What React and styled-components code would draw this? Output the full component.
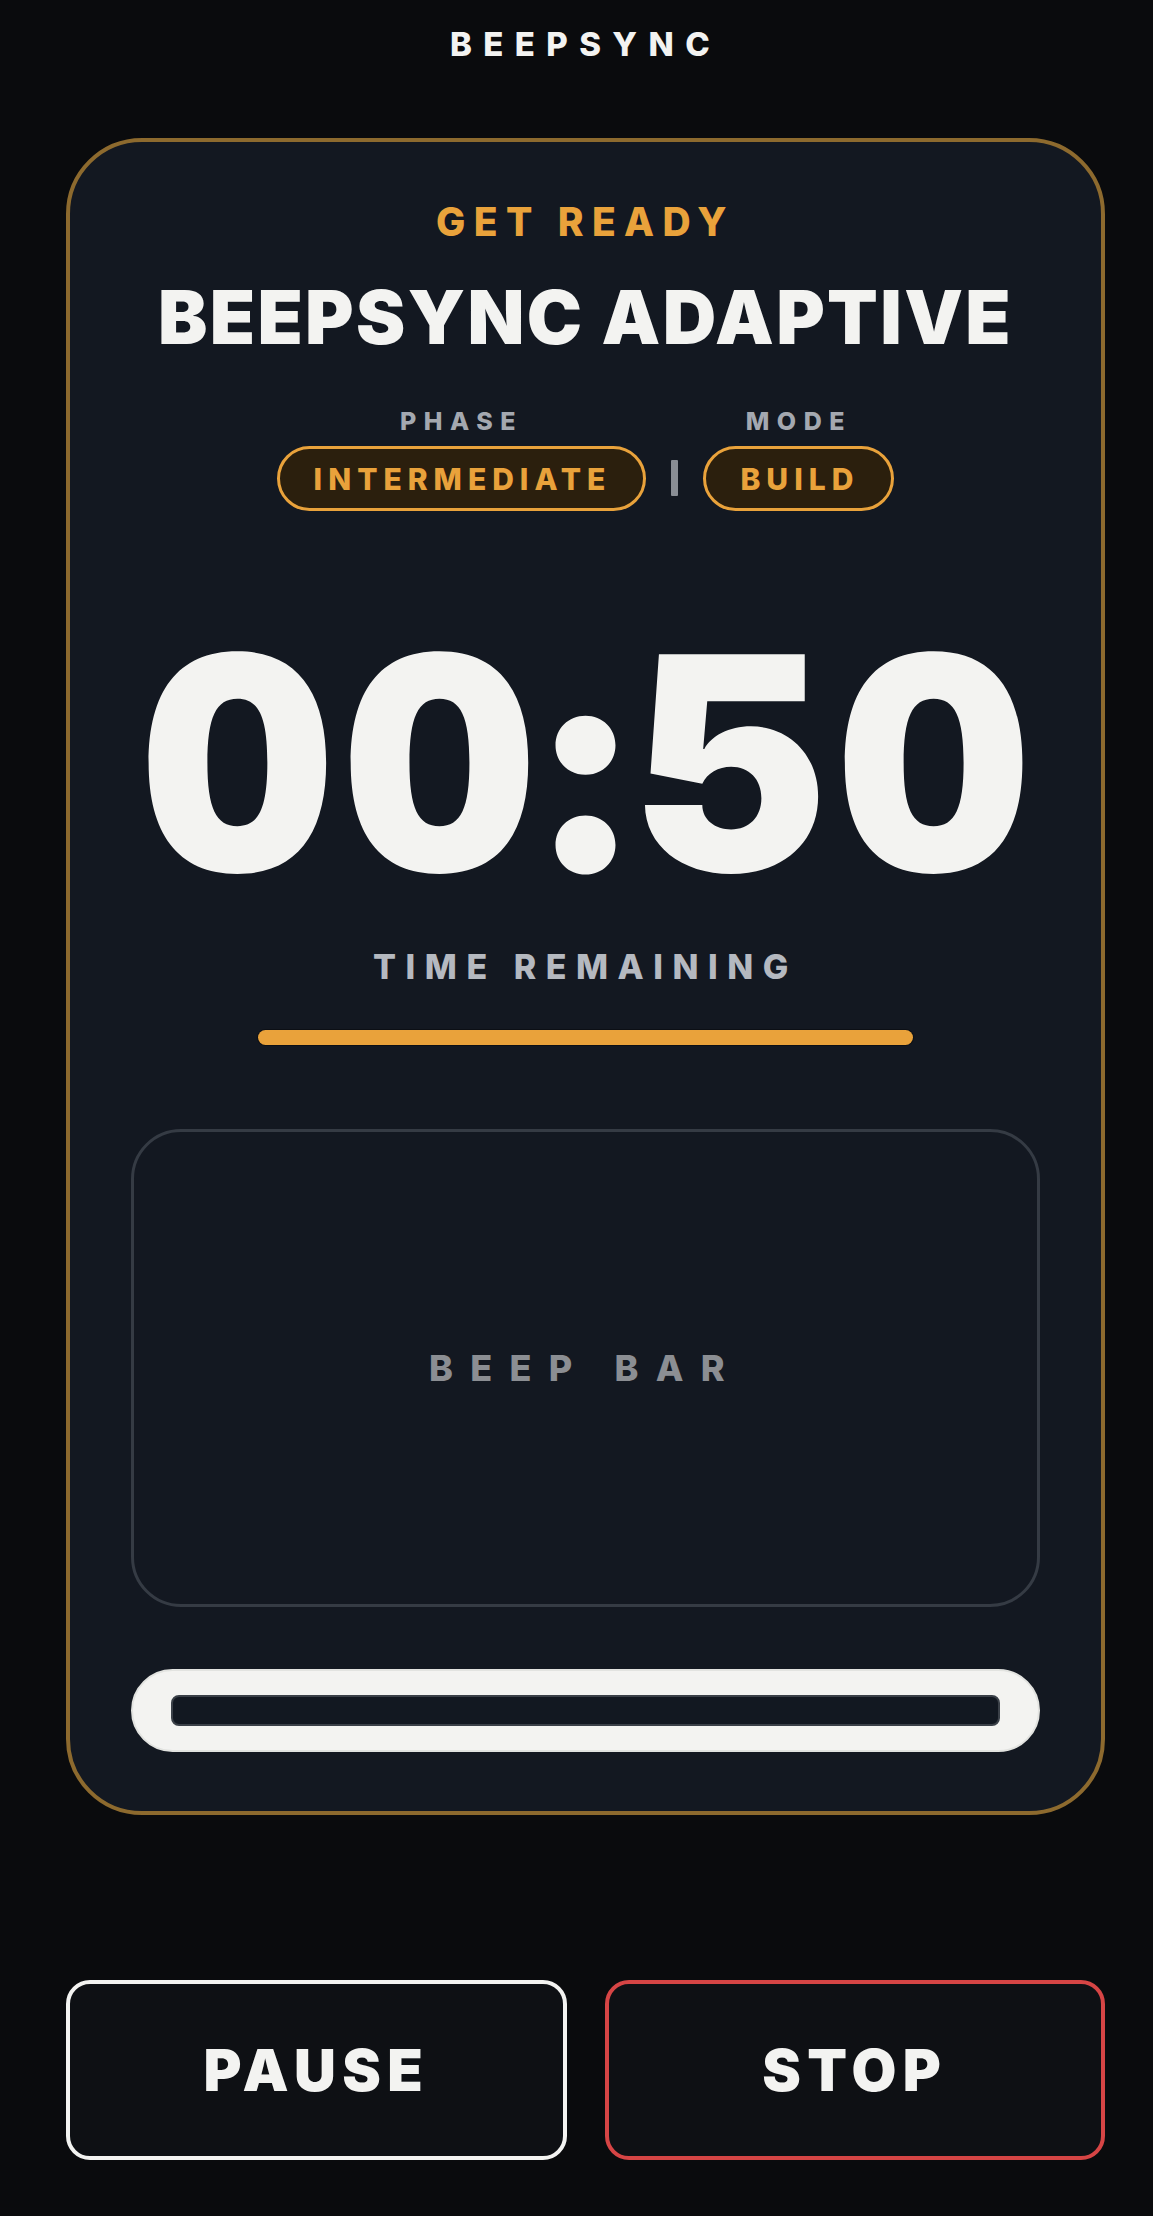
import React from "react";
import styled, { createGlobalStyle } from "styled-components";

const Global = createGlobalStyle`
  html, body { margin: 0; padding: 0; background: #0a0b0d; }
  body { font-family: Inter, "Noto Sans", "Liberation Sans", sans-serif; color: #f3f3f1; }
  * { box-sizing: border-box; }
`;

const Page = styled.div`
  min-height: 2216px;
  padding: 28px 48px 0 66px;
  display: flex;
  flex-direction: column;
  align-items: stretch;
`;

const Brand = styled.h1`
  margin: 0;
  text-align: center;
  font-size: 33px;
  line-height: 1;
  font-weight: 800;
  letter-spacing: 0.345em;
  color: #f3f3f1;
`;

const Card = styled.section`
  margin-top: 77px;
  width: 1039px;
  border: 4px solid #8d6a2e;
  border-radius: 76px;
  background: #131821;
  padding: 60px 61px 59px 61px;
  display: flex;
  flex-direction: column;
  align-items: center;
`;

const Status = styled.div`
  font-size: 39px;
  line-height: 1;
  font-weight: 800;
  letter-spacing: 0.215em;
  color: #e9a23b;
`;

const Title = styled.h2`
  margin: 39px 0 0;
  font-size: 74px;
  line-height: 1;
  font-weight: 900;
  letter-spacing: 0.032em;
  color: #f3f3f1;
`;

const MetaRow = styled.div`
  margin-top: 55px;
  display: flex;
  align-items: flex-end;
  gap: 25px;
`;

const MetaCol = styled.div`
  display: flex;
  flex-direction: column;
  align-items: center;
  gap: 12px;
`;

const MetaLabel = styled.div`
  font-size: 25px;
  line-height: 1;
  font-weight: 800;
  letter-spacing: 0.3em;
  color: #a4a8b0;
`;

const Pill = styled.div`
  height: 65px;
  padding: 0 32px 0 34px;
  border: 3px solid #e9a23b;
  border-radius: 40px;
  background: #2b1f0d;
  color: #e9a23b;
  font-size: 30px;
  font-weight: 800;
  letter-spacing: 0.2em;
  display: flex;
  align-items: center;
  justify-content: center;
`;

const Divider = styled.span`
  width: 7px;
  height: 36px;
  margin-bottom: 15px;
  background: #8a8e95;
  border-radius: 1px;
`;

const Timer = styled.div`
  margin-top: 103px;
  font-size: 298px;
  line-height: 1;
  font-weight: 900;
  letter-spacing: 10px;
  padding-left: 10px;
  color: #f3f3f1;
  font-variant-numeric: tabular-nums;
`;

const TimerLabel = styled.div`
  margin-top: 38px;
  font-size: 34px;
  line-height: 1;
  font-weight: 800;
  letter-spacing: 0.28em;
  color: #b5b9c0;
`;

const Progress = styled.div`
  margin-top: 46px;
  width: 655px;
  height: 15px;
  border-radius: 8px;
  background: #e9a23b;
  box-shadow: 0 0 0 1px rgba(0, 0, 0, 0.35);
`;

const BeepBox = styled.div`
  margin-top: 84px;
  width: 100%;
  height: 478px;
  border: 3px solid #353b44;
  border-radius: 50px;
  display: flex;
  align-items: center;
  justify-content: center;
`;

const BeepText = styled.div`
  font-size: 36px;
  line-height: 1;
  font-weight: 800;
  letter-spacing: 0.48em;
  color: #8b8e93;
`;

const Track = styled.div`
  margin-top: 62px;
  width: 100%;
  height: 83px;
  border-radius: 42px;
  background: #f3f3f1;
  border: 2px solid #e2e3e0;
  padding: 24px 38px;
  display: flex;
`;

const TrackInner = styled.div`
  flex: 1;
  border: 2px solid #3a4048;
  border-radius: 8px;
  background: #121821;
`;

const Controls = styled.div`
  margin-top: 165px;
  width: 1039px;
  display: grid;
  grid-template-columns: 1fr 1fr;
  gap: 38px;
`;

const ControlButton = styled.button`
  height: 180px;
  border: 4px solid ${(p) => (p.$danger ? "#d64545" : "#f3f3f1")};
  border-radius: 24px;
  background: #0e1014;
  color: #f3f3f1;
  font-family: inherit;
  font-size: 58px;
  font-weight: 900;
  letter-spacing: 0.11em;
  padding: 0;
  cursor: pointer;
`;

export default function App() {
  return (
    <>
      <Global />
      <Page>
        <Brand>BEEPSYNC</Brand>
        <Card>
          <Status>GET READY</Status>
          <Title>BEEPSYNC ADAPTIVE</Title>
          <MetaRow>
            <MetaCol>
              <MetaLabel>PHASE</MetaLabel>
              <Pill>INTERMEDIATE</Pill>
            </MetaCol>
            <Divider />
            <MetaCol>
              <MetaLabel>MODE</MetaLabel>
              <Pill>BUILD</Pill>
            </MetaCol>
          </MetaRow>
          <Timer>00:50</Timer>
          <TimerLabel>TIME REMAINING</TimerLabel>
          <Progress />
          <BeepBox>
            <BeepText>BEEP BAR</BeepText>
          </BeepBox>
          <Track>
            <TrackInner />
          </Track>
        </Card>
        <Controls>
          <ControlButton>PAUSE</ControlButton>
          <ControlButton $danger>STOP</ControlButton>
        </Controls>
      </Page>
    </>
  );
}
